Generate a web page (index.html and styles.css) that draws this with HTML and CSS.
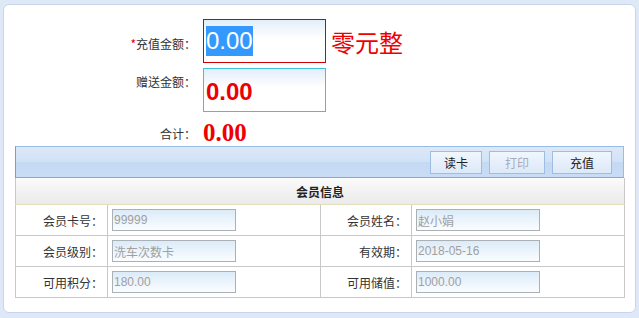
FILE: index.html
```html
<!DOCTYPE html>
<html lang="zh-CN">
<head>
  <meta charset="UTF-8" />
  <title>会员充值</title>
  <link rel="stylesheet" href="styles.css">
</head>
<body>
  <div class="panel">
    <div class="amount-row amount-row--first">
      <label class="amount-label"><span class="req">*</span>充值金额：</label>
      <div class="amount-box amount-box--focus"><span class="amount-sel">0.00</span></div>
      <span class="amount-words">零元整</span>
    </div>
    <div class="amount-row amount-row--gift">
      <label class="amount-label">赠送金额：</label>
      <div class="amount-box amount-box--gift"><span class="gift-value">0.00</span></div>
    </div>
    <div class="amount-row amount-row--total">
      <label class="amount-label">合计：</label>
      <span class="total-value">0.00</span>
    </div>

    <div class="toolbar">
      <button class="tb-btn tb-btn--read">读卡</button>
      <button class="tb-btn tb-btn--print" disabled>打印</button>
      <button class="tb-btn tb-btn--pay">充值</button>
    </div>

    <table class="member-table">
      <colgroup>
        <col class="col-label">
        <col class="col-value">
        <col class="col-label col-label--right">
        <col class="col-value">
      </colgroup>
      <thead>
        <tr><th colspan="4">会员信息</th></tr>
      </thead>
      <tbody>
        <tr>
          <td class="cell-label">会员卡号：</td>
          <td class="cell-value"><input class="info-input" type="text" value="99999" readonly></td>
          <td class="cell-label">会员姓名：</td>
          <td class="cell-value"><input class="info-input" type="text" value="赵小娟" readonly></td>
        </tr>
        <tr>
          <td class="cell-label">会员级别：</td>
          <td class="cell-value"><input class="info-input" type="text" value="洗车次数卡" readonly></td>
          <td class="cell-label">有效期：</td>
          <td class="cell-value"><input class="info-input" type="text" value="2018-05-16" readonly></td>
        </tr>
        <tr>
          <td class="cell-label">可用积分：</td>
          <td class="cell-value"><input class="info-input" type="text" value="180.00" readonly></td>
          <td class="cell-label">可用储值：</td>
          <td class="cell-value"><input class="info-input" type="text" value="1000.00" readonly></td>
        </tr>
      </tbody>
    </table>
  </div>
</body>
</html>
```

FILE: styles.css
```css
body {
  margin: 0;
  background: #dfe8f6;
  font-family: "Liberation Sans", "Noto Sans CJK SC", sans-serif;
  font-size: 12px;
  color: #333;
}
.panel {
  margin: 4px 3px 0;
  height: 309px;
  box-sizing: border-box;
  background: #fff;
  border: 1px solid #c7d6ea;
  border-radius: 6px;
  padding-top: 14px;
}

/* 金额区域 */
.amount-row {
  display: flex;
  align-items: center;
}
.amount-label {
  width: 192px;
  margin-right: 7px;
  text-align: right;
  font-family: "Noto Sans CJK SC", sans-serif;
  font-size: 12px;
  color: #333;
}
.req {
  color: #e00;
}
.amount-row--first .amount-label {
  padding-top: 4px;
}
.amount-row--gift {
  margin-top: 5px;
  align-items: flex-start;
}
.amount-row--gift .amount-label {
  padding-top: 5px;
}
.amount-row--total {
  margin-top: 8px;
  height: 26px;
}
.amount-box {
  width: 123px;
  height: 44px;
  box-sizing: border-box;
  background: linear-gradient(#e3eef9, #fff 45%);
  display: flex;
  align-items: center;
  padding-left: 2px;
}
.amount-box--focus {
  border: 1px solid #d40000;
}
.amount-box--gift {
  border: 1px solid #3fc0dc;
}
.amount-sel {
  background: #3399ff;
  color: #fff;
  font-family: "Liberation Sans", sans-serif;
  font-size: 24px;
  line-height: 30px;
}
.amount-words {
  margin-left: 5px;
  color: #e00;
  font-family: "Liberation Serif", "Noto Sans CJK SC", serif;
  font-size: 24px;
}
.gift-value {
  color: #e00;
  font-family: "Liberation Sans", sans-serif;
  font-weight: bold;
  font-size: 24px;
  padding-top: 3px;
}
.total-value {
  color: #e00;
  font-family: "Liberation Serif", serif;
  font-weight: bold;
  font-size: 25px;
  line-height: 26px;
}

/* 工具栏 */
.toolbar {
  margin: 0 11px;
  height: 32px;
  box-sizing: border-box;
  border: 1px solid #99bbe8;
  border-left-color: #7f9cc4;
  border-bottom-color: #8aa6cc;
  background: linear-gradient(#dce8f7, #d2e2f6 48%, #c4d9f3 52%, #c9dcf5);
  display: flex;
  justify-content: flex-end;
  align-items: center;
  gap: 7px;
  padding-right: 11px;
}
.tb-btn {
  height: 23px;
  box-sizing: border-box;
  border: 1px solid #9fbde3;
  background: linear-gradient(#f0f6fd, #dce9f8);
  font-family: "Noto Sans CJK SC", sans-serif;
  font-size: 12px;
  color: #222;
  padding: 0;
  cursor: pointer;
}
.tb-btn--read {
  width: 52px;
}
.tb-btn--print {
  width: 56px;
  color: #aab;
}
.tb-btn--pay {
  width: 60px;
}

/* 会员信息 */
.member-table {
  margin: 0 11px;
  width: 609px;
  border-collapse: collapse;
  table-layout: fixed;
}
.col-label {
  width: 92px;
}
.col-label--right {
  width: 91px;
}
.col-value {
  width: 213px;
}
.member-table th {
  height: 26px;
  padding: 0;
  border: 1px solid #c8c8c8;
  border-top: none;
  border-bottom-color: #e3dfbd;
  background: linear-gradient(#fbfbfb, #f0f0f0 60%, #ebebeb);
  font-family: "Noto Sans CJK SC", sans-serif;
  font-size: 12px;
  font-weight: bold;
  color: #222;
}
.member-table td {
  height: 30px;
  padding: 0;
  border: 1px solid #c8c8c8;
}
.cell-label {
  padding-right: 4px !important;
  text-align: right;
  font-family: "Noto Sans CJK SC", sans-serif;
}
.cell-value {
  padding-left: 4px !important;
}
.info-input {
  display: block;
  width: 124px;
  height: 22px;
  box-sizing: border-box;
  border: 1px solid #a9b0b8;
  background: linear-gradient(#dcebf8, #fafdff);
  padding: 0 1px;
  font-family: "Liberation Sans", "Noto Sans CJK SC", sans-serif;
  font-size: 12px;
  color: #a0a0a0;
  outline: none;
}
```
